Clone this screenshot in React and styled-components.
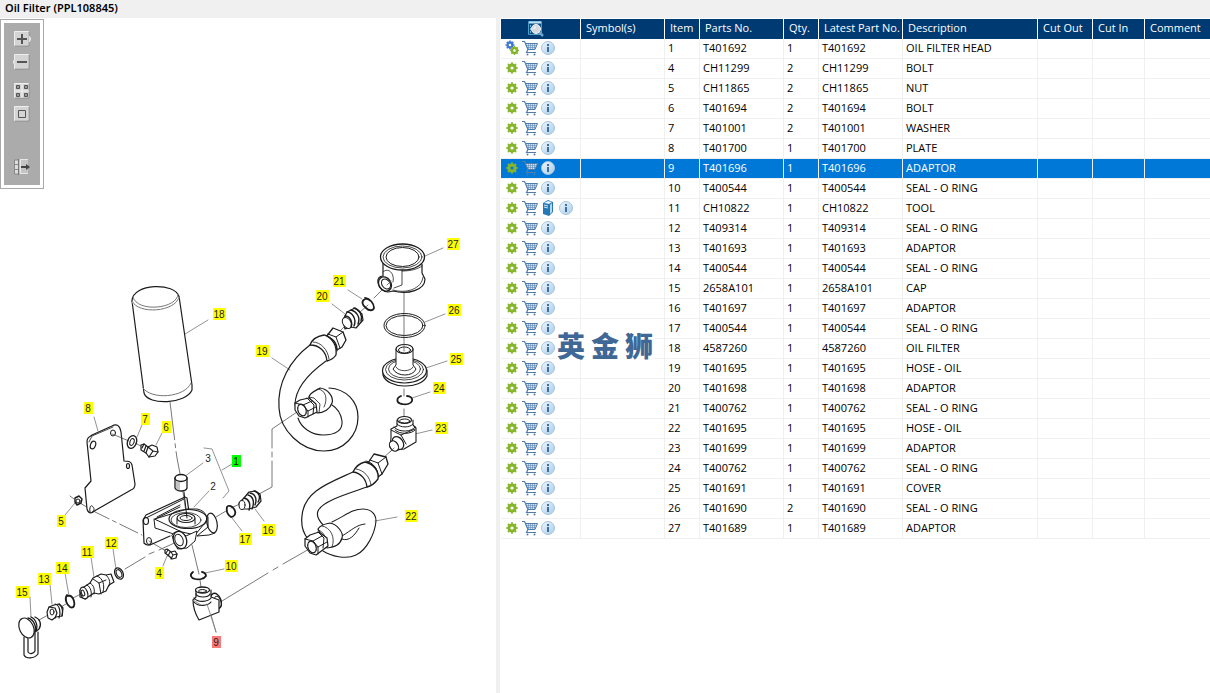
import React, { useState } from "react";
import styled, { createGlobalStyle } from "styled-components";

const GlobalStyle = createGlobalStyle`
	* {
		box-sizing: border-box;
	}
	body {
		margin: 0;
		background: #fff;
		color: #000;
		font-family: "Open Sans", "Noto Sans", sans-serif;
		font-size: 11px;
	}
`;

const parts = [
	["1", "T401692", "1", "OIL FILTER HEAD"],
	["4", "CH11299", "2", "BOLT"],
	["5", "CH11865", "2", "NUT"],
	["6", "T401694", "2", "BOLT"],
	["7", "T401001", "2", "WASHER"],
	["8", "T401700", "1", "PLATE"],
	["9", "T401696", "1", "ADAPTOR"],
	["10", "T400544", "1", "SEAL - O RING"],
	["11", "CH10822", "1", "TOOL"],
	["12", "T409314", "1", "SEAL - O RING"],
	["13", "T401693", "1", "ADAPTOR"],
	["14", "T400544", "1", "SEAL - O RING"],
	["15", "2658A101", "1", "CAP"],
	["16", "T401697", "1", "ADAPTOR"],
	["17", "T400544", "1", "SEAL - O RING"],
	["18", "4587260", "1", "OIL FILTER"],
	["19", "T401695", "1", "HOSE - OIL"],
	["20", "T401698", "1", "ADAPTOR"],
	["21", "T400762", "1", "SEAL - O RING"],
	["22", "T401695", "1", "HOSE - OIL"],
	["23", "T401699", "1", "ADAPTOR"],
	["24", "T400762", "1", "SEAL - O RING"],
	["25", "T401691", "1", "COVER"],
	["26", "T401690", "2", "SEAL - O RING"],
	["27", "T401689", "1", "ADAPTOR"],
];

const headings = [
	"Symbol(s)",
	"Item",
	"Parts No.",
	"Qty.",
	"Latest Part No.",
	"Description",
	"Cut Out",
	"Cut In",
	"Comment",
];

const columnWidths = [80, 84, 35, 84, 35, 84, 135, 55, 52];

// item number, centre x, centre y
const callouts = [
	["27", 453, 244],
	["26", 454, 310],
	["25", 456, 359],
	["24", 439, 388],
	["23", 441, 428],
	["22", 411, 516],
	["21", 339, 281],
	["20", 322, 296],
	["19", 262, 351],
	["18", 219, 314],
	["17", 245, 539],
	["16", 268, 530],
	["15", 22, 592],
	["14", 62, 568],
	["13", 44, 579],
	["12", 111, 543],
	["11", 87, 552],
	["10", 231, 566],
	["9", 216, 642],
	["8", 88, 408],
	["7", 145, 419],
	["6", 166, 427],
	["5", 61, 521],
	["4", 159, 573],
	["3", 208, 458],
	["2", 213, 486],
	["1", 236, 461],
];

const Page = styled.div`
	min-height: 100vh;
	display: flex;
	flex-direction: column;
`;

const TitleBar = styled.h1`
	margin: 0;
	height: 18px;
	padding-left: 5px;
	background: #f0f0f0;
	font-family: "Noto Sans", "Open Sans", sans-serif;
	font-size: 11px;
	font-weight: 600;
	line-height: 16px;
`;

const Split = styled.main`
	flex: 1;
	display: grid;
	grid-template-columns: minmax(0, 496fr) minmax(0, 714fr);
`;

const DrawingPane = styled.section`
	position: relative;
`;

const Drawing = styled.svg`
	display: block;
	width: 100%;
	fill: none;
	stroke: #1c1c1c;
	stroke-width: 1;
	stroke-linecap: round;
	stroke-linejoin: round;
`;

const CalloutText = styled.text`
	font-family: "Liberation Sans", Arial, sans-serif;
	font-size: 10px;
	text-anchor: middle;
	fill: #222;
	stroke: none;
`;

const Toolbar = styled.div`
	position: absolute;
	top: 1px;
	left: 0;
	padding: 3px;
	border: 1px solid #a9a9a9;
	background: #fff;
`;

const ToolList = styled.div`
	display: flex;
	flex-direction: column;
	align-items: center;
	width: 36px;
	padding: 7px 0 9px;
	background: #ababab;
`;

const ToolGroup = styled.div`
	display: flex;
	flex-direction: column;
	gap: 5px;
	margin-bottom: ${(props) => props.$space || 0}px;
`;

const IconButton = styled.button`
	display: flex;
	align-items: center;
	justify-content: center;
	width: 18px;
	height: 18px;
	padding: 0;
	border: 0;
	background: none;
	cursor: pointer;
`;

const PartsPane = styled.section`
	position: relative;
	border-left: 4px solid #f0f0f0;
	padding: 1px 0 0 1px;
`;

const PartsTable = styled.table`
	width: 100%;
	table-layout: fixed;
	border-collapse: separate;
	border-spacing: 0;
`;

const HeadCell = styled.th`
	height: 20px;
	padding: 0 0 0 5px;
	border-right: 1px solid #fff;
	background: #003a73;
	color: #fff;
	font-weight: 400;
	line-height: 18px;
	text-align: left;
	vertical-align: top;
	white-space: nowrap;
	&:last-child {
		border-right: 0;
	}
`;

const SearchCell = styled(HeadCell)`
	padding: 1px 0 0 26px;
`;

const Row = styled.tr`
	color: ${(props) => (props.$selected ? "#fff" : "#000")};
	background: ${(props) => (props.$selected ? "#0078d7" : "#fff")};
	cursor: default;
`;

const Cell = styled.td`
	height: 20px;
	padding: 0 0 0 3px;
	border-right: 1px solid #f0f0f0;
	border-bottom: 1px solid #f0f0f0;
	line-height: 18px;
	vertical-align: top;
	white-space: nowrap;
	&:last-child {
		border-right: 0;
	}
`;

const IconCell = styled(Cell)`
	padding-left: 2px;
`;

const Icons = styled.div`
	display: flex;
`;

const Watermark = styled.div`
	position: absolute;
	top: 312px;
	left: 57px;
	display: flex;
	gap: 6px;
	height: 30px;
	padding-right: 2px;
	background: #fff;
	color: #3f6896;
	font-family: "Noto Sans CJK SC", sans-serif;
	font-size: 28px;
	font-weight: 900;
	line-height: 30px;
	pointer-events: none;
`;

const GearShape = ({ cx, cy, r, color }) => (
	<g fill="none" stroke={color}>
		<circle cx={cx} cy={cy} r={r * 0.62} strokeWidth={r * 0.6} />
		<circle
			cx={cx}
			cy={cy}
			r={r * 0.95}
			strokeWidth={r * 0.36}
			pathLength="16"
			strokeDasharray="1 1"
			strokeDashoffset="0.5"
		/>
	</g>
);

const GearIcon = () => (
	<svg width="14" height="14" viewBox="0 0 14 14">
		<GearShape cx={7} cy={7} r={5} color="#86b52b" />
	</svg>
);

const AssemblyIcon = () => (
	<svg width="16" height="16" viewBox="0 0 16 16">
		<GearShape cx={6} cy={5} r={4} color="#3f78d0" />
		<GearShape cx={10.5} cy={10.5} r={4} color="#86b52b" />
	</svg>
);

const CartIcon = () => (
	<svg width="16" height="16" viewBox="0 0 16 16" fill="none" stroke="#4f7cab">
		<path d="M0 1.500h2.500l1 2L6 9.500 4.500 12.500h9.500" strokeWidth="1.200" />
		<path d="M3.500 3.500h12L13 9.500H6z" fill="#d5e2ef" />
		<path
			d="M4 5.500h10.500M5 7.500h9M6.500 3.500v6M8.500 3.500v6M10.500 3.500v6M12.500 3.500v6"
			strokeWidth=".5"
		/>
		<circle cx="5.500" cy="14.500" r="1" fill="#4f7cab" stroke="none" />
		<circle cx="12.500" cy="14.500" r="1" fill="#4f7cab" stroke="none" />
	</svg>
);

const InfoIcon = () => (
	<svg width="14" height="14" viewBox="0 0 14 14">
		<defs>
			<linearGradient id="info" x2="1" y2="1">
				<stop offset="0" stopColor="#f0f7fc" />
				<stop offset="1" stopColor="#a9cbe5" />
			</linearGradient>
		</defs>
		<circle cx="7" cy="7" r="6.500" fill="url(#info)" stroke="#a5c6df" />
		<path d="M6 3h2v2H6zM6 6h2v5H6z" fill="#3d6fa3" />
	</svg>
);

const BookIcon = () => (
	<svg width="14" height="16" viewBox="0 0 14 16">
		<path d="M2 3l5-3 5 2v10l-4 4-6-2z" fill="#2378b5" />
		<path d="M3 3l4-2 4 1-3 2z" fill="#e8f2f9" />
		<path d="M9 5l2-2v9l-2 2z" fill="#b9d8ec" />
		<path d="M3 5l4 1M3 7l4 1" stroke="#d5eaf7" />
	</svg>
);

const SearchIcon = () => (
	<svg width="18" height="18" viewBox="0 0 18 18">
		<path d="M1.500 1.500h13v13h-13z" fill="#0d4f86" stroke="#4f9cc8" />
		<path d="M2 2.500h12" stroke="#bfe3f2" strokeWidth="2" />
		<path d="M3.500 5v9" stroke="#6eb6d9" strokeDasharray="2 1" />
		<path d="M12 12l4 4" stroke="#6fa6c8" strokeWidth="2.500" />
		<circle cx="9" cy="9" r="4.500" fill="#d3d9de" stroke="#f2f5f7" />
		<path d="M7 9a2 2 0 0 1 2-2" stroke="#fff" fill="none" />
	</svg>
);

const ToolIcon = ({ kind }) => (
	<svg width="18" height="18" viewBox="0 0 18 18" fill="none" stroke="#555">
		<path
			d={kind === "export" ? "M6 1.500h9v14H6" : "M1.500 1.500h14v14h-14z"}
			fill={kind === "export" ? "#c4c4c4" : "#d4d4d4"}
			stroke={kind === "export" ? "none" : "#eee"}
		/>
		{kind !== "export" && <path d="M2 16h14V2" stroke="#8d8d8d" />}
		{kind === "in" && (
			<>
				<path d="M16 6l2 3-2 3" fill="#ddd" stroke="#eee" />
				<path d="M4 9h10M9 4v10" strokeWidth="2" />
			</>
		)}
		{kind === "out" && (
			<>
				<path d="M2 6L0 9l2 3" fill="#ddd" stroke="#eee" />
				<path d="M4 9h10" strokeWidth="2" />
			</>
		)}
		{kind === "grid" && (
			<>
				<path d="M9 2v14M2 9h14" stroke="#f3f3f3" />
				<path
					d="M3.500 3.500h3v3h-3zM11.500 3.500h3v3h-3zM3.500 11.500h3v3h-3zM11.500 11.500h3v3h-3z"
					fill="#999"
				/>
			</>
		)}
		{kind === "fit" && <path d="M5.500 5.500h7v7h-7z" />}
		{kind === "export" && (
			<>
				<path d="M1.500 2h4v14h-4zM1 6.500h4M1 11.500h4" fill="#ddd" stroke="#888" />
				<path d="M5.500 1v16" stroke="#777" />
				<path d="M7 1.500h8M7 15.500h8M7.500 1v15" stroke="#e6e6e6" />
				<path d="M8 9h6" stroke="#444" strokeWidth="2" />
				<path d="M13 6l4 3-4 3z" fill="#444" stroke="none" />
			</>
		)}
	</svg>
);

const Tool = ({ kind, label }) => (
	<IconButton type="button" aria-label={label}>
		<ToolIcon kind={kind} />
	</IconButton>
);

const Callout = ({ item, x, y, selected }) => {
	const width = item.length === 2 ? 13 : 9;
	const plain = item === "2" || item === "3";
	let color = "#ffff00";
	if (item === "1") color = "#00ff00";
	if (selected) color = "#fa7878";
	return (
		<g>
			{!plain && (
				<rect
					x={Math.round(x - width / 2)}
					y={y - 6}
					width={width}
					height="12"
					fill={color}
					stroke="none"
				/>
			)}
			<CalloutText x={x} y={y + 4}>
				{item}
			</CalloutText>
		</g>
	);
};

const OilFilterDrawing = ({ selected }) => (
	<Drawing viewBox="0 18 496 675" role="img" aria-label="Oil filter parts">
		{/* centre lines */}
		<g stroke="#555" strokeWidth=".8">
			<path d="M170 402l6 49 1 7 4 21M183 492l4 27" strokeDasharray="38 4 4 4" />
			<path d="M404 293v48M404 389v7M404 409v10" />
			<path d="M387 285l-13 13M368 305l-8 7M347 324l-7 7" />
			<path d="M297 412l-25 17v19M272 452v5M272 461v26l-13 7M240 504l-9 4M226 511l-10 6" />
			<path d="M392 450l-10 9M311 548l-28 16M278 567l-5 3M268 573l-46 28" />
			<path d="M112 434l17 7M135 443l6 3M70 496l4 3M80 503l10 6" />
			<path d="M91 510l51 25" strokeDasharray="20 4 4 4" />
			<path d="M149 541l17 10M181 540l-22 10M154 552l-5 2M145 557l-20 12M81 594l-8 4M66 604l-7 4M48 615l-9 5" />
			<path d="M192 545l7 29M200 580l1 7" />
		</g>

		{/* leader lines */}
		<g stroke="#777" strokeWidth=".8">
			<path d="M443 248l-18 8M445 314l-20 8M447 361l-21 7M430 392l-18 6M432 430l-17 4M397 517l-22 4M348 290l14 9M332 304l13 10M272 358l18 12M208 320l-23 14M242 531l-10-13M264 521l-9-12M30 597l1 20M65 573l4 23M50 584l2 20M113 549l3 20M91 557l3 20M224 569l-19 4M216 632l-8-28M94 417l4 14M142 425l-5 12M162 433l-6 12M65 515l10-12M163 566l4-10M203 463l-19 14M209 491l-15 16M232 464l-10 6" />
			<path d="M204 448l8 1 17 42-6 7" />
		</g>

		{/* 27 adaptor */}
		<path d="M383 263v13c-4 0-6 3-5 7 1 5 5 9 10 9l5-1c15 4 32-1 32-12l-3-6v-9" fill="#fff" strokeWidth="1.200" />
		<ellipse cx="402.500" cy="257" rx="22" ry="13" fill="#fff" strokeWidth="1.300" />
		<ellipse cx="402.500" cy="257" rx="19.500" ry="11" strokeWidth=".8" />
		<ellipse cx="402.500" cy="257" rx="16.500" ry="9.500" />
		<path d="M383 272c5-5 12 1 10 10M393 290c13 4 29-1 30-13M402 271v14l-8 3M402 271c9 0 16-2 20-5" strokeWidth=".8" />
		<ellipse cx="385" cy="284" rx="6" ry="7.500" transform="rotate(-35 385 284)" strokeWidth="1.300" />
		<ellipse cx="386" cy="284" rx="4" ry="5.500" transform="rotate(-35 386 284)" />
		<path d="M387 285l4-4" stroke="#555" strokeWidth=".8" />
		{/* 26 seal */}
		<ellipse cx="404.500" cy="325.500" rx="20.500" ry="12" />
		<ellipse cx="404.500" cy="325.500" rx="18.500" ry="10" />
		{/* 25 cover */}
		<path d="M383 370v5c4 14 38 15 44 1v-6" strokeWidth="1.200" />
		<ellipse cx="404.500" cy="370.500" rx="22" ry="12.500" fill="#fff" strokeWidth="1.200" />
		<ellipse cx="404.500" cy="369.500" rx="19" ry="10.500" strokeWidth=".8" />
		<ellipse cx="404.500" cy="369" rx="16" ry="9" strokeWidth=".8" />
		<path d="M396 349v16l-3 4c4 8 20 8 23 0l-3-4v-16" fill="#fff" />
		<path d="M396 367c2 5 15 5 17 0" strokeWidth=".8" />
		<ellipse cx="404.500" cy="349" rx="8.500" ry="4.500" fill="#fff" strokeWidth="1.200" />
		<ellipse cx="404.500" cy="350" rx="6" ry="3" />
		<path d="M404 342v9" stroke="#555" strokeWidth=".8" />
		{/* 24 seal */}
		<path d="M401 396c-5 2-5 7 1 8 4 1 9 0 10-3 1-3-2-5-5-5" strokeWidth="1.800" />
		{/* 23 elbow */}
		<path d="M397 420v6l-6 3v9l-1 9 7 3 7-1 12-7v-14l-3-3v-5" fill="#fff" strokeWidth="1.100" />
		<ellipse cx="404.500" cy="420" rx="7" ry="3.500" fill="#fff" strokeWidth="1.200" />
		<ellipse cx="404.500" cy="421" rx="5" ry="2" />
		<path d="M397 424c3 4 13 4 16 0M394 427c5 6 18 5 21 0M395 430c5 5 17 4 20 0M391 430l10 5 5 9M401 435l14-6" />
		<ellipse cx="398" cy="443" rx="5" ry="7" transform="rotate(-35 398 443)" fill="#fff" strokeWidth="1.300" />
		<ellipse cx="394" cy="446" rx="4" ry="5.500" transform="rotate(-35 394 446)" fill="#fff" strokeWidth="1.200" />
		<path d="M394 448l-4 4" stroke="#555" strokeWidth=".8" />

		{/* 21 seal */}
		<path d="M365 299c-4 2-3 6 1 9 3 3 7 3 8 0 0-5-4-9-9-10" strokeWidth="1.800" />
		{/* 20 adaptor */}
		<path d="M343 320l4-8 8-4 7 6 1 6-7 8-5-1-6 2z" fill="#fff" strokeWidth="1.200" />
		<ellipse cx="347" cy="323" rx="4" ry="6" transform="rotate(-35 347 323)" fill="#fff" />
		<path d="M347 312c5 0 10 7 7 14M351 310c5 1 10 7 7 14M354 308c5 1 9 7 7 13M345 316c5 0 8 6 6 11" strokeWidth="1.400" />

		{/* 19 hose */}
		<path d="M310 345c-20 15-33 38-31 63 1 22 22 43 45 43 20 0 34-16 34-34 0-16-12-28-29-29" strokeWidth="1.200" />
		<path d="M326 361c-18 13-31 27-31 44M298 418c3 10 14 17 25 17 13 0 20-5 19-14-1-7-5-13-10-16" strokeWidth="1.100" />
		<path d="M326 337L333 328L343 332L346 340L342 347L337 350C337 343 333 338 326 337z" fill="#fff" strokeWidth="1.300" />
		<path d="M328 334l8 3 7-5M336 337l4 11M325 335c6 1 12 8 12 16" />
		<path d="M310 345C312 339 318 336 324 335C333 338 337 346 336 355C334 358 331 360 327 361C326 351 319 345 310 345z" fill="#fff" strokeWidth="1.300" />
		<path d="M313 342c8 0 15 8 16 17" strokeWidth=".8" />
		<path d="M309 397c0-4 8-7 11-9 8 1 14 9 12 15-2 6-8 10-15 10z" fill="#fff" strokeWidth="1.200" />
		<path d="M318 389c8 1 10 10 6 18M309 397l5 1 6 6-1 9" strokeWidth=".8" />
		<path d="M295 403l5-3 9-2 7 6 1 8-12 6-6-2-4-6z" fill="#fff" strokeWidth="1.200" />
		<path d="M295 403l8 2 5 6v6M303 405l9-4M308 411l8-4M307 398l7 7-1 9" />
		<ellipse cx="302" cy="410" rx="4" ry="6" transform="rotate(-20 302 410)" strokeDasharray="2 1" strokeWidth="1.300" />

		{/* 22 hose */}
		<path d="M353 472c-24 11-49 19-51 44-1 8 1 17 6 23M367 487c-17 6-45 14-49 24-2 5 2 11 6 15" strokeWidth="1.200" />
		<path d="M332 522c13-6 20-13 31-13 8 0 13 5 13 12-1 12-9 29-20 34-10 5-25 1-33-4" strokeWidth="1.100" />
		<path d="M342 536c10-6 14-11 23-12M342 539c7 3 13-4 17-11" />
		<path d="M368 463L374 454L386 457L388 464L382 474L378 477C378 470 374 465 368 463z" fill="#fff" strokeWidth="1.300" />
		<path d="M370 460l8 3 8-6M378 463l4 11M366 461c7 1 13 9 12 17" />
		<path d="M353 472C356 466 360 463 365 462C374 464 379 471 378 479C375 483 372 486 367 487C366 479 361 473 353 472z" fill="#fff" strokeWidth="1.300" />
		<path d="M356 469c8 1 14 8 15 16" strokeWidth=".8" />
		<path d="M318 529c3-5 8-5 12-6 7 1 14 10 12 15-2 7-7 9-15 10z" fill="#fff" strokeWidth="1.200" />
		<path d="M322 526c8 1 14 11 10 21M318 530c6 1 10 10 7 18" strokeWidth=".8" />
		<path d="M305 539l5-4 9-3 8 6 1 8-12 9-6-2-5-7z" fill="#fff" strokeWidth="1.200" />
		<path d="M305 539l8 2 5 6v7M313 541l9-5M318 547l9-5M318 532l6 6-1 10" />
		<ellipse cx="312" cy="547" rx="4" ry="6" transform="rotate(-20 312 547)" strokeDasharray="2 1" strokeWidth="1.300" />

		{/* 18 oil filter */}
		<path d="M132 301l12 92c4 13 42 11 48-3v-5l-13-89" fill="#fff" strokeWidth="1.200" />
		<ellipse cx="155.500" cy="298.500" rx="24" ry="11.500" fill="#fff" stroke="none" transform="rotate(-5 155.500 298.500)" />
		<path d="M132 301c0-18 44-19 47-4" strokeWidth="1.200" />
		<path d="M133 297c4 16 45 12 45-3M132 301c6 14 44 11 47-4M143 388c8 12 42 10 48-5" stroke="#777" />

		{/* 8 plate */}
		<path d="M87 442c0-4 2-5 5-7l20-9c5-3 8 0 9 6l3 29c4 0 7 0 8 4l3 19c0 3-1 5-4 6l-35 20c-4 3-7 5-9-1l-2-21 6-7z" fill="#fff" strokeWidth="1.200" />
		<path d="M89 442l3-6 21-9" strokeWidth=".8" />
		<ellipse cx="93" cy="445" rx="2.500" ry="4" transform="rotate(20 93 445)" strokeWidth="1.200" />
		<ellipse cx="113" cy="433" rx="2.500" ry="3" />
		<ellipse cx="128" cy="466" rx="1.500" ry="2.500" strokeWidth="1.200" />
		<path d="M90 512c-1-5 1-8 3-5 2 2 1 4-1 5" />
		<path d="M112 434l10 4" stroke="#555" strokeWidth=".8" />
		{/* 7 washer */}
		<ellipse cx="132" cy="442" rx="4.500" ry="6.500" transform="rotate(20 132 442)" strokeWidth="1.300" />
		<ellipse cx="132" cy="442" rx="2" ry="3.500" transform="rotate(20 132 442)" />
		{/* 6 bolt */}
		<path d="M141 445l3-1 4 3 4-2 5 2 1 5-3 4-6 1-3-4-5-3z" fill="#fff" strokeWidth="1.200" />
		<path d="M144 444l-2 4M146 446l-2 5M148 447l-2 6M148 447l5 4-4 6M153 451l5 1" strokeWidth="1.200" />
		{/* 5 nut */}
		<path d="M75 498l4-2 3 3-1 4-4 2-2-3z" strokeWidth="1.400" />
		<circle cx="78" cy="501" r="2" />
		{/* 4 bolt */}
		<path d="M165 550l2-1 4 3 4-1 2 3-1 4-4 1-3-3-4-3z" fill="#fff" strokeWidth="1.200" />
		<path d="M168 550l-2 3M170 552l-2 4M171 552l2 3-2 4M173 555l4-1" strokeWidth="1.100" />

		{/* filter head */}
		<path d="M144 543l-1-23 3-5 39-18 2 1 2 14M150 545l20-9M144 543c2 2 5 3 7 1" strokeWidth="1.200" />
		<path d="M146 518l38-19M155 519l25-12M157 517l23-12M154 519l1 9 25 8" />
		<ellipse cx="146" cy="521" rx="2.500" ry="3.500" strokeWidth="1.200" />
		<ellipse cx="149" cy="541" rx="2.500" ry="3.500" />
		<ellipse cx="212" cy="523" rx="5" ry="10" transform="rotate(-12 212 523)" fill="#fff" strokeWidth="1.200" />
		<path d="M155 519l32-10h10c10 2 12 10 7 15l-9 11-13-3z" fill="#fff" />
		<path d="M208 517v10l-11 9 12-1 6-2" />
		<ellipse cx="188" cy="519" rx="19" ry="9.500" strokeWidth="1.200" />
		<ellipse cx="186" cy="520" rx="15" ry="7.500" strokeWidth=".8" />
		<ellipse cx="186" cy="518" rx="9" ry="4.500" fill="#fff" strokeWidth="1.200" />
		<ellipse cx="186" cy="518" rx="6" ry="2.500" />
		<path d="M177 519v5M195 519v5M184 492l3 26" />
		<path d="M172 535c2-5 10-4 14 1l11-5-2 10-8 7-9 1z" fill="#fff" />
		<ellipse cx="180" cy="540" rx="6.500" ry="9" transform="rotate(-20 180 540)" fill="#fff" strokeWidth="1.300" />
		<ellipse cx="179" cy="540" rx="4" ry="6" transform="rotate(-20 179 540)" />
		{/* 3 sleeve */}
		<path d="M175 478v10c2 4 11 4 12 0v-10" fill="#fff" strokeWidth="1.300" />
		<ellipse cx="181" cy="478" rx="6" ry="3.500" fill="#fff" strokeWidth="1.500" />
		<path d="M177 482v7M179 482v8" stroke="#888" />

		{/* 17 seal */}
		<path d="M227 507c-1 5 1 8 4 10 3 0 5-3 4-6-1-3-4-6-7-5" strokeWidth="1.800" />
		{/* 16 adaptor */}
		<path d="M239 503l5-5 5-6 6-1 5 3 1 7-5 6-7 2-6 0-3-1z" fill="#fff" strokeWidth="1.200" />
		<ellipse cx="242" cy="505" rx="3" ry="4.500" fill="#fff" />
		<path d="M244 498c5 1 7 6 5 12M248 495c5 1 7 7 4 14M250 493c6 1 7 7 5 12M254 491c5 1 7 6 4 11" strokeWidth="1.400" />

		{/* 12 washer */}
		<ellipse cx="119" cy="573.500" rx="4" ry="6" transform="rotate(-25 119 573.500)" strokeWidth="1.300" />
		<ellipse cx="119" cy="573.500" rx="2.500" ry="4" transform="rotate(-25 119 573.500)" />
		{/* 11 adaptor */}
		<path d="M80 590l4-3 6-4 3-5 8-4 5 1 5-1 3 8-5 3-3 6-7 3-5-1-9 6-5-2z" fill="#fff" strokeWidth="1.200" />
		<ellipse cx="84" cy="593" rx="3.500" ry="6" transform="rotate(-20 84 593)" fill="#fff" strokeWidth="1.200" />
		<ellipse cx="83" cy="593" rx="1.500" ry="3" transform="rotate(-20 83 593)" />
		<path d="M87 585c4 2 5 8 4 12M90 583c4 2 5 7 4 11M93 579l6 4 2 11M99 583l7-3M97 576c6 2 8 9 6 16M106 575c3 3 5 7 3 11" />
		{/* 14 seal */}
		<path d="M67 595c-3 4 0 10 3 12 4 2 5-2 4-6-1-3-3-6-6-5" strokeWidth="1.800" />
		{/* 13 adaptor */}
		<path d="M47 612l2-5 5-2 5-1 4 4-1 8-6 1-4 3-4-2z" fill="#fff" strokeWidth="1.200" />
		<ellipse cx="52" cy="612" rx="2" ry="3" />
		<path d="M49 607l6 1 2 5-2 5M55 604c5 1 6 9 4 14M59 604c4 2 4 9 3 12" strokeWidth="1.200" />
		{/* 15 cap */}
		<path d="M28 618c5 1 10 9 6 15M31 617c5 2 8 10 4 15M35 617c5 2 7 7 4 12l-5 4" strokeWidth="1.300" />
		<path d="M24 637v18c2 4 10 4 14-1v-22M28 638v14c2 3 6 1 7-1v-18" strokeWidth="1.200" />
		<ellipse cx="26.500" cy="628" rx="7" ry="10.500" transform="rotate(-25 26.500 628)" fill="#fff" strokeWidth="1.200" />

		{/* 10 seal */}
		<path d="M193 572c-4 3-2 6 2 7 4 1 9 0 11-3 0-2-2-4-4-4" strokeWidth="1.800" />
		{/* 9 elbow */}
		<ellipse cx="216" cy="601" rx="5" ry="8" transform="rotate(-20 216 601)" fill="#fff" strokeWidth="1.400" />
		<ellipse cx="218" cy="602" rx="3" ry="6" transform="rotate(-20 218 602)" />
		<path d="M196 591v6l-3 3c0 7 3 15 6 20l20-8v-12l-8-3v-7" fill="#fff" strokeWidth="1.200" />
		<ellipse cx="202.500" cy="590" rx="7" ry="3" fill="#fff" strokeWidth="1.300" />
		<ellipse cx="202.500" cy="591" rx="4" ry="1.500" />
		<path d="M196 594c2 4 12 4 14 0M194 598c4 5 14 4 17 0M194 602c4 5 14 4 17 0" strokeWidth="1.200" />
		<path d="M207 604l9 28M193 600l8 5" stroke="#777" strokeWidth=".8" />

		{callouts.map(([item, x, y]) => (
			<Callout key={item} item={item} x={x} y={y} selected={item === selected} />
		))}
	</Drawing>
);

const App = () => {
	const [selected, setSelected] = useState("9");

	return (
		<Page>
			<GlobalStyle />
			<TitleBar>Oil Filter (PPL108845)</TitleBar>
			<Split>
				<DrawingPane>
					<OilFilterDrawing selected={selected} />
					<Toolbar>
						<ToolList>
							<ToolGroup $space={11}>
								<Tool kind="in" label="Zoom in" />
								<Tool kind="out" label="Zoom out" />
							</ToolGroup>
							<ToolGroup $space={35}>
								<Tool kind="grid" label="Show all" />
								<Tool kind="fit" label="Fit to window" />
							</ToolGroup>
							<Tool kind="export" label="Hide list" />
						</ToolList>
					</Toolbar>
				</DrawingPane>
				<PartsPane>
					<PartsTable>
						<colgroup>
							{columnWidths.map((width, i) => (
								<col key={i} width={width} />
							))}
							<col />
						</colgroup>
						<thead>
							<tr>
								<SearchCell>
									<IconButton type="button" aria-label="Search parts">
										<SearchIcon />
									</IconButton>
								</SearchCell>
								{headings.map((heading) => (
									<HeadCell key={heading}>{heading}</HeadCell>
								))}
							</tr>
						</thead>
						<tbody>
							{parts.map(([item, number, qty, description]) => (
								<Row
									key={item}
									$selected={item === selected}
									onClick={() => setSelected(item)}
								>
									<IconCell>
										<Icons>
											<IconButton type="button" aria-label="Part details">
												{item === "1" ? <AssemblyIcon /> : <GearIcon />}
											</IconButton>
											<IconButton type="button" aria-label="Add to cart">
												<CartIcon />
											</IconButton>
											{item === "11" && (
												<IconButton type="button" aria-label="Tool guide">
													<BookIcon />
												</IconButton>
											)}
											<IconButton type="button" aria-label="Information">
												<InfoIcon />
											</IconButton>
										</Icons>
									</IconCell>
									<Cell />
									<Cell>{item}</Cell>
									<Cell>{number}</Cell>
									<Cell>{qty}</Cell>
									<Cell>{number}</Cell>
									<Cell>{description}</Cell>
									<Cell />
									<Cell />
									<Cell />
								</Row>
							))}
						</tbody>
					</PartsTable>
					<Watermark>
						<span>英</span>
						<span>金</span>
						<span>狮</span>
					</Watermark>
				</PartsPane>
			</Split>
		</Page>
	);
};

export default App;
